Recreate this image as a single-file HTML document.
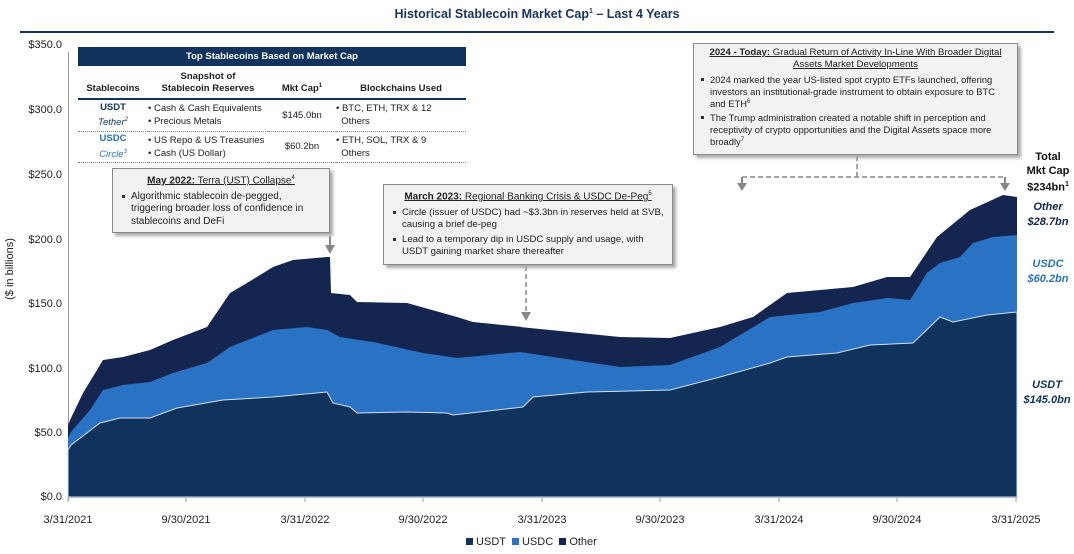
<!DOCTYPE html>
<html><head><meta charset="utf-8"><style>
*{margin:0;padding:0;box-sizing:border-box}
body{width:1074px;height:554px;background:#fff;position:relative;overflow:hidden;font-family:"Liberation Sans",sans-serif;color:#222}
.a{position:absolute}
.box{position:absolute;background:#f2f2f2;border:1.5px solid #8a8a8a;box-shadow:3px 3px 3px #aaa;font-size:10px;line-height:12.5px;padding:3px 8px}
.box h4{font-size:10px;text-align:center;font-weight:normal;text-decoration:underline;margin-bottom:3px}
.box h4 b{font-weight:bold}
.box li{list-style:none;padding-left:10px;position:relative;margin-bottom:2px}
.box li:before{content:"";position:absolute;left:1px;top:4px;width:3px;height:3px;background:#333}
.yl{position:absolute;right:1012px;font-size:11px;color:#222}
.xl{position:absolute;top:514px;font-size:11px;transform:translateX(-50%)}
table{border-collapse:collapse;font-size:9.5px}
.rl{position:absolute;font-size:11px;font-weight:bold;font-style:italic;text-align:center;line-height:15px}
</style></head><body>
<div class="a" style="left:0;width:1074px;top:7px;text-align:center;font-size:12.5px;font-weight:bold;color:#1b3560">Historical Stablecoin Market Cap<sup style="font-size:7px">1</sup> – Last 4 Years</div>
<div class="a" style="left:20px;top:31px;width:1034px;height:2px;background:#1b3560"></div>

<svg class="a" style="left:0;top:0" width="1074" height="554">
<line x1="68.5" y1="52" x2="68.5" y2="500" stroke="#999" stroke-width="1"/>
<line x1="68" y1="497.5" x2="1018" y2="497.5" stroke="#999"/>
<g stroke="#999">
<line x1="68" y1="497" x2="68" y2="502"/><line x1="186" y1="497" x2="186" y2="502"/><line x1="305" y1="497" x2="305" y2="502"/><line x1="423" y1="497" x2="423" y2="502"/><line x1="542" y1="497" x2="542" y2="502"/><line x1="660" y1="497" x2="660" y2="502"/><line x1="779" y1="497" x2="779" y2="502"/><line x1="897" y1="497" x2="897" y2="502"/><line x1="1016" y1="497" x2="1016" y2="502"/>
</g>
<path fill="#14264f" d="M68,425 L71,418 L83,393 L103,360 L123,357 L150,350 L173,340 L207,327 L230,293 L247,283 L273,267 L293,260 L327,257 L330,257 L331,293 L350,295 L357,302 L407,303 L457,317 L473,322 L523,327 L520,327 L620,337 L670,338 L720,327 L753,317 L787,293 L853,287 L887,277 L910,277 L937,237 L970,210 L1003,195 L1017,197 L1017,497 L68,497Z"/>
<path fill="#2a72c3" d="M68,438 L71,432 L90,410 L103,390 L123,385 L150,382 L173,373 L207,363 L230,347 L273,330 L307,327 L327,330 L340,337 L373,342 L423,353 L457,358 L520,352 L540,355 L620,367 L670,365 L720,347 L770,317 L820,312 L853,303 L887,298 L910,300 L927,273 L940,263 L960,257 L973,243 L993,237 L1017,235 L1017,497 L68,497Z"/>
<path fill="#10335e" stroke="#cfe0f5" stroke-width="1" d="M68,450 L71,445 L100,423 L120,418 L150,418 L177,408 L223,400 L273,397 L327,392 L333,403 L350,407 L357,413 L407,412 L447,413 L453,415 L523,407 L533,397 L587,392 L670,390 L720,377 L770,363 L787,357 L837,353 L870,345 L913,343 L940,317 L953,322 L987,315 L1017,312 L1017,497 L68,497Z"/>
<g stroke="#888" stroke-width="1.5" fill="none" stroke-dasharray="5,3">
<line x1="526" y1="266" x2="526" y2="312"/>
<line x1="742" y1="177" x2="1005" y2="177"/>
<line x1="857" y1="156" x2="857" y2="177"/>
</g>
<g fill="#888">
<rect x="329" y="236" width="2" height="10"/><path d="M325,245 L335,245 L330,254Z"/>
<path d="M521,312 L531,312 L526,321Z"/>
<rect x="741" y="177" width="2" height="7"/><path d="M737,183 L747,183 L742,191Z"/>
<rect x="1004" y="177" width="2" height="7"/><path d="M1000,183 L1010,183 L1005,191Z"/>
</g>
</svg>

<div class="yl" style="top:39px">$350.0</div>
<div class="yl" style="top:104px">$300.0</div>
<div class="yl" style="top:169px">$250.0</div>
<div class="yl" style="top:234px">$200.0</div>
<div class="yl" style="top:298px">$150.0</div>
<div class="yl" style="top:363px">$100.0</div>
<div class="yl" style="top:427px">$50.0</div>
<div class="yl" style="top:491px">$0.0</div>
<div class="a" style="left:-30px;top:263px;width:80px;text-align:center;font-size:11px;transform:rotate(-90deg)">($ in billions)</div>

<div class="xl" style="left:68px">3/31/2021</div>
<div class="xl" style="left:186px">9/30/2021</div>
<div class="xl" style="left:305px">3/31/2022</div>
<div class="xl" style="left:423px">9/30/2022</div>
<div class="xl" style="left:542px">3/31/2023</div>
<div class="xl" style="left:660px">9/30/2023</div>
<div class="xl" style="left:779px">3/31/2024</div>
<div class="xl" style="left:897px">9/30/2024</div>
<div class="xl" style="left:1016px">3/31/2025</div>

<div class="a" style="left:466px;top:536px;font-size:11px"><span style="display:inline-block;width:7px;height:7px;background:#10335e"></span> USDT &nbsp;<span style="display:inline-block;width:7px;height:7px;background:#2a72c3"></span> USDC &nbsp;<span style="display:inline-block;width:7px;height:7px;background:#14264f"></span> Other</div>

<div class="a" style="left:78px;top:47px;width:388px">
<div style="background:#10335e;color:#fff;font-size:9.5px;font-weight:bold;text-align:center;height:19px;line-height:19px">Top Stablecoins Based on Market Cap</div>
<table style="width:388px">
<tr style="font-weight:bold;text-align:center;border-bottom:2px solid #10335e;height:33px;vertical-align:bottom;line-height:12px"><td style="width:70px;padding-bottom:3px">Stablecoins</td><td style="width:120px;padding-bottom:3px">Snapshot of<br>Stablecoin Reserves</td><td style="width:68px;padding-bottom:3px">Mkt Cap<sup style="font-size:6px">1</sup></td><td style="padding-bottom:3px">Blockchains Used</td></tr>
<tr style="border-bottom:1px dotted #888;height:32px;line-height:13px"><td style="text-align:center"><b style="color:#10335e">USDT</b><br><i style="color:#10335e">Tether<sup style="font-size:6px">2</sup></i></td><td>• Cash &amp; Cash Equivalents<br>• Precious Metals</td><td style="text-align:center">$145.0bn</td><td>• BTC, ETH, TRX &amp; 12<br>&nbsp; Others</td></tr>
<tr style="border-bottom:1px dotted #888;height:31px;line-height:13px"><td style="text-align:center"><b style="color:#2a72c3">USDC</b><br><i style="color:#2a72c3">Circle<sup style="font-size:6px">3</sup></i></td><td>• US Repo &amp; US Treasuries<br>• Cash (US Dollar)</td><td style="text-align:center">$60.2bn</td><td>• ETH, SOL, TRX &amp; 9<br>&nbsp; Others</td></tr>
</table></div>

<div class="box" style="left:112px;top:168px;width:218px;height:65px"><h4><b>May 2022:</b> Terra (UST) Collapse<sup style="font-size:6px">4</sup></h4><ul><li>Algorithmic stablecoin de-pegged, triggering broader loss of confidence in stablecoins and DeFi</li></ul></div>

<div class="box" style="left:383px;top:184px;width:290px;height:81px;font-size:9.6px"><h4><b>March 2023:</b> Regional Banking Crisis &amp; USDC De-Peg<sup style="font-size:6px">5</sup></h4><ul><li>Circle (issuer of USDC) had ~$3.3bn in reserves held at SVB, causing a brief de-peg</li><li>Lead to a temporary dip in USDC supply and usage, with USDT gaining market share thereafter</li></ul></div>

<div class="box" style="left:693px;top:43px;width:325px;height:112px;font-size:9.4px;line-height:12px;padding:3px 6px"><h4 style="font-size:9.6px;line-height:12px"><b>2024 - Today:</b> Gradual Return of Activity In-Line With Broader Digital Assets Market Developments</h4><ul><li>2024 marked the year US-listed spot crypto ETFs launched, offering investors an institutional-grade instrument to obtain exposure to BTC and ETH<sup style="font-size:6px;line-height:0">6</sup></li><li>The Trump administration created a notable shift in perception and receptivity of crypto opportunities and the Digital Assets space more broadly<sup style="font-size:6px;line-height:0">7</sup></li></ul></div>

<div class="rl" style="left:1020px;top:150px;width:56px;font-style:normal;color:#111;line-height:14px">Total<br>Mkt Cap<br>$234bn<sup style="font-size:7px">1</sup></div>
<div class="rl" style="left:1020px;top:200px;width:56px;color:#14264f">Other<br>$28.7bn</div>
<div class="rl" style="left:1020px;top:257px;width:56px;color:#2a72c3">USDC<br>$60.2bn</div>
<div class="rl" style="left:1018px;top:378px;width:58px;color:#10335e">USDT<br>$145.0bn</div>
</body></html>
